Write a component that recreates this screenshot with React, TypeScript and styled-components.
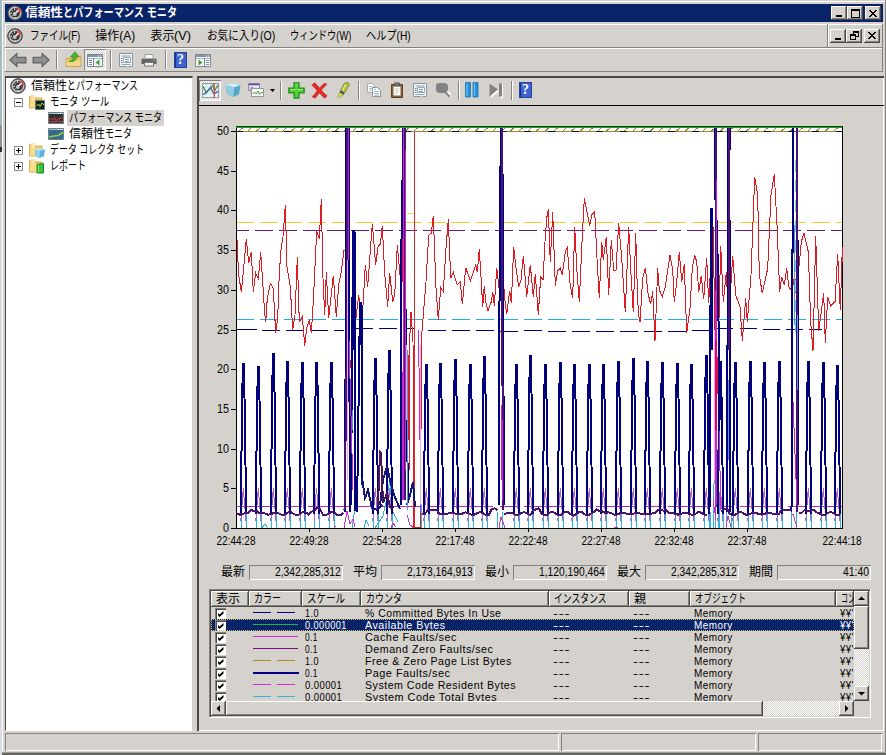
import React, { useLayoutEffect, useRef, useState } from 'react';
import styled, { createGlobalStyle, css } from 'styled-components';

const FACE = '#d5d2cd';
const NAVY = '#0a246a';
const SHADOW = '#85827e';
const DARK = '#4a4947';

const Global = createGlobalStyle`
  * { box-sizing: border-box; }
  html, body { margin: 0; background: ${FACE}; overflow: hidden; }
  body { font: 12px/16px "Liberation Sans", "Noto Sans CJK JP", sans-serif; color: #000; }
  svg { display: block; flex: none; }
`;

/* ---------- text fitted to a column width ---------- */
const FitBox = styled.span<{ $w: number }>`
  display: block;
  flex: none;
  width: ${p => p.$w}px;
  height: 16px;
  line-height: 16px;
`;
const FitInner = styled.span`
  display: inline-block;
  white-space: pre;
  transform-origin: 0 50%;
  line-height: 16px;
  vertical-align: top;
`;
function Fit({ w, children }: { w: number; children: React.ReactNode }) {
  const ref = useRef<HTMLSpanElement>(null);
  const [scale, setScale] = useState(1);
  useLayoutEffect(() => {
    if (ref.current) setScale(w / ref.current.offsetWidth);
  }, [w]);
  return (
    <FitBox $w={w}>
      <FitInner ref={ref} style={{ transform: `scaleX(${scale})` }}>{children}</FitInner>
    </FitBox>
  );
}

/* ---------- shared bevels ---------- */
const raised = css`
  background: ${FACE};
  box-shadow: inset -1px -1px ${DARK}, inset 1px 1px #fff, inset -2px -2px ${SHADOW};
`;
const sunken = css`
  box-shadow: inset 1px 1px ${SHADOW}, inset -1px -1px #fff;
`;

/* ---------- frame ---------- */
const Screen = styled.div`
  display: flex;
  width: 886px;
  height: 755px;
  background: ${FACE};
`;
const Backdrop = styled.div`
  width: 2px;
  background: linear-gradient(#9fbdc0 0 125px, #8f9493 125px 147px, #303030 147px 152px, #d9dde2 152px);
`;
const Frame = styled.div`
  flex: 1;
  display: flex;
  flex-direction: column;
  padding: 4px 2px 0 3px;
  border-bottom: 2px solid #66645f;
  box-shadow: inset 0 -1px #a09d98, inset -1px 0 ${SHADOW}, inset 0 1px ${FACE}, inset 1px 2px #fff;
`;
const TitleBar = styled.div`
  display: flex;
  align-items: center;
  height: 18px;
  margin-right: 1px;
  padding: 0 2px 0 2px;
  background: ${NAVY};
  color: #fff;
  font-weight: 700;
`;
const TitleText = styled.div`
  display: flex;
  flex: 1;
  padding-left: 2px;
`;
const BoxButton = styled.div<{ $gap?: boolean }>`
  width: 16px;
  height: 14px;
  margin-left: ${p => (p.$gap ? 2 : 0)}px;
  display: grid;
  place-items: center;
  ${raised}
`;
const MenuBar = styled.div`
  display: flex;
  align-items: center;
  height: 24px;
  margin: 2px 1px 0 0;
  padding-left: 2px;
  border: solid ${SHADOW};
  border-width: 0 1px 1px 0;
  box-shadow: inset 1px 1px #fff;
`;
const MenuItems = styled.div`
  display: flex;
  flex: 1;
  gap: 15.2px;
  padding-left: 7px;
`;
const MdiButtons = styled.div`
  display: flex;
  align-items: center;
  height: 23px;
  padding: 0 2px 0 2px;
  border-left: 1px solid ${SHADOW};
  box-shadow: inset 1px 0 #fff;
`;
const MainTools = styled.div`
  display: flex;
  align-items: center;
  height: 24px;
  margin-right: 1px;
  padding-left: 4px;
  border: solid ${SHADOW};
  border-width: 0 1px 1px 0;
  box-shadow: inset 1px 1px #fff;
`;
const Tool = styled.div<{ $w?: number; $on?: boolean }>`
  display: grid;
  place-items: center;
  flex: none;
  width: ${p => p.$w ?? 23}px;
  height: 21px;
  ${p => p.$on && css`
    background: repeating-conic-gradient(#fff 0 25%, ${FACE} 0 50%) 0 0 / 2px 2px;
    ${sunken}
  `}
`;
const Divider = styled.div<{ $m?: string }>`
  width: 2px;
  height: 19px;
  flex: none;
  margin: ${p => p.$m ?? '0 5px'};
  border-left: 1px solid ${SHADOW};
  border-right: 1px solid #fff;
`;
const Panes = styled.div`
  display: flex;
  height: 655px;
  margin-top: 4px;
`;
const TreePane = styled.div`
  width: 188px;
  flex: none;
  padding: 0 0 0 3px;
  background: #fff;
  border: solid ${DARK};
  border-width: 2px 0 0 1px;
  border-right: 1px solid ${FACE};
  border-bottom: 1px solid #fff;
`;
const TreeRow = styled.div<{ $depth: number }>`
  display: flex;
  align-items: center;
  height: 16px;
  padding-left: ${p => p.$depth}px;
`;
const TreeText = styled.div<{ $on?: boolean }>`
  display: flex;
  height: 16px;
  margin-left: 3px;
  padding: 0 2px;
  background: ${p => (p.$on ? FACE : 'transparent')};
`;
const Expander = styled.div`
  width: 9px;
  height: 9px;
  margin-right: 6px;
  display: grid;
  place-items: center;
  border: 1px solid #8b8b8b;
  background: #fff;
`;
const MonitorPane = styled.div`
  flex: 1;
  min-width: 0;
  display: flex;
  flex-direction: column;
  margin-left: 4px;
  border: solid ${DARK};
  border-width: 2px 0 0 2px;
  box-shadow: inset -1px -1px #fff;
`;
const GraphTools = styled.div`
  display: flex;
  align-items: center;
  height: 28px;
  padding-bottom: 3px;
  border-bottom: 1px solid #000;
`;

/* ---------- value bar ---------- */
const Stats = styled.div`
  display: flex;
  align-items: center;
  height: 16px;
  padding-left: 22px;
  margin-top: 6px;
`;
const Stat = styled.div`
  display: flex;
  align-items: center;
  width: 132px;
  flex: none;
`;
const StatValue = styled.div`
  display: flex;
  justify-content: flex-end;
  align-items: center;
  width: 94px;
  height: 15px;
  margin-left: 4px;
  padding-right: 2px;
  ${sunken}
`;

/* ---------- counter list ---------- */
const COLS = '38px 53px 59px 188px 80px 61px 146px 18px';
const ListFrame = styled.div`
  display: grid;
  grid-template: 110px 15px / 643px 15px;
  width: 662px;
  height: 129px;
  margin: 9px 0 0 10px;
  padding: 2px;
  border: solid #fff;
  border-width: 0 1px 1px 0;
  box-shadow: inset 1px 1px ${SHADOW}, inset 2px 2px ${DARK};
`;
const ListView = styled.div`
  overflow: hidden;
`;
const HeaderRow = styled.div`
  display: grid;
  grid-template-columns: ${COLS};
  height: 16px;
`;
const HeaderCell = styled.div`
  display: flex;
  align-items: center;
  overflow: hidden;
  padding-left: 5px;
  ${raised}
`;
const Row = styled.div<{ $on?: boolean }>`
  display: grid;
  grid-template-columns: ${COLS};
  height: 12px;
  align-items: center;
  font-size: 11px;
  letter-spacing: 0.5px;
  color: ${p => (p.$on ? '#fff' : '#000')};
  background: ${p => (p.$on ? NAVY : 'transparent')};
  outline: ${p => (p.$on ? '1px dotted #d9c06a' : 'none')};
  outline-offset: -1px;
`;
const Cell = styled.div<{ $pad?: number }>`
  display: flex;
  align-items: center;
  height: 12px;
  overflow: hidden;
  padding-left: ${p => p.$pad ?? 4}px;
`;
const Check = styled.div`
  display: grid;
  place-items: center;
  width: 11px;
  height: 11px;
  background: #fff;
  box-shadow: inset 1px 1px ${SHADOW}, inset 2px 2px ${DARK};
`;
const Bar = styled.div<{ $dir: 'row' | 'column' }>`
  display: flex;
  flex-direction: ${p => p.$dir};
  background: repeating-conic-gradient(#fff 0 25%, ${FACE} 0 50%) 0 0 / 2px 2px;
`;
const BarButton = styled.div`
  display: grid;
  place-items: center;
  width: 15px;
  height: 15px;
  flex: none;
  ${raised}
`;
const Thumb = styled.div<{ $w: number; $h: number }>`
  width: ${p => p.$w}px;
  height: ${p => p.$h}px;
  ${raised}
`;
const Push = styled.div`
  flex: 1;
`;

/* ---------- status bar ---------- */
const Status = styled.div`
  display: grid;
  grid-template-columns: 554px 195px 124px;
  gap: 2px;
  height: 18px;
  margin-top: 2px;
`;
const StatusPane = styled.div`
  ${sunken}
`;

/* ---------- icons ---------- */
const Ico = ({ children, s = 16 }: { children: React.ReactNode; s?: number }) => (
  <svg width={s} height={s} viewBox="0 0 16 16">{children}</svg>
);
const Gauge = () => (
  <Ico>
    <circle cx="8" cy="8" r="7.3" fill="#77787a" stroke="#3c3c3e" />
    <circle cx="8" cy="8" r="5.6" fill="#3a3c40" stroke="#c9c9c9" strokeWidth="1.3" />
    <path d="M3.5 8.5 5 8.2M4.5 5l1.2 1M7.6 3.3v1.6M4.8 11.4l1-1" stroke="#fff" />
    <path d="M9.5 2.300a6 6 0 0 1 4.500 5l-3.200.7Z" fill="#d53b43" />
    <path d="m7.5 9.2 4-4.2" stroke="#fff" strokeWidth="1.4" />
    <circle cx="7.8" cy="9" r="1.9" fill="#c8c8c8" />
    <path d="M6.5 12.5h4" stroke="#aaa" />
  </Ico>
);
const Arrow = ({ flip }: { flip?: boolean }) => (
  <Ico s={18}>
    <path d="M.8 8 7 2.3v3.2h8v5H7v3.2Z" fill="#8f8f8f" stroke="#5d5d5d" strokeWidth="1"
      transform={flip ? 'translate(16 0) scale(-1 1)' : undefined} />
  </Ico>
);
const UpFolder = () => (
  <Ico s={17}>
    <path d="M1 7h5l1-2h8v9.5H1Z" fill="#f2c763" stroke="#c59a3d" strokeWidth=".8" />
    <path d="M1.5 9h13v5h-13Z" fill="#f8d884" />
    <path d="M3.5 9.5C6 9.5 7.6 8 7.7 5.4H5.2L9.4.8l3.8 4.6h-2.4c0 3.600-3.500 5.600-7.300 4.100Z" fill="#4cb82f" stroke="#2b801c" strokeWidth=".6" />
  </Ico>
);
const Window = ({ side }: { side: 'l' | 'r' }) => (
  <Ico>
    <path d="M.5 2.500h15v12H.500Z" fill="#f7f8f8" stroke="#7c8791" />
    <path d="M1 3h14v2H1Z" fill="#8494a8" />
    <path d="M11 4h1m1 0h1" stroke="#fff" />
    <path d="M1 6.500h14" stroke="#aab3bc" />
    {side === 'l' ? (
      <>
        <path d="M6.500 6v8" stroke="#7c8791" />
        <path d="M2 8.500h3M2 10.500h3M2 12.500h3" stroke="#6f8fb8" />
        <path d="M12.500 7.500v6l-4-3Z" fill="#3d9b34" />
      </>
    ) : (
      <>
        <path d="M9.500 6v8" stroke="#7c8791" />
        <path d="M11 8.500h3M11 10.500h3M11 12.500h3" stroke="#6f8fb8" />
        <path d="M3.500 7.500v6l4-3Z" fill="#3d9b34" />
      </>
    )}
  </Ico>
);
const Properties = () => (
  <Ico>
    <path d="M1.500 1.500h13v13h-4l-1 1-1-1h-7Z" fill="#eef3f6" stroke="#8c959d" />
    <path d="M3.500 4h9M3.500 12.500h9" stroke="#8fa6ba" />
    <path d="M5.500 5.500h7v5h-7Z" fill="#fff" stroke="#9aa6b0" />
    <path d="M3 6.500h1.500M3 8.500h1.500M3 10.500h1.500" stroke="#5682b0" />
    <path d="M7 7.500h4M7 9.500h4" stroke="#87a0b6" />
  </Ico>
);
const Printer = () => (
  <Ico>
    <path d="M4 2.500h8V7H4Z" fill="#f8f8f8" stroke="#999" />
    <path d="M.5 6.500h15v5.500H.5Z" fill="#626466" />
    <path d="M1.5 6.500h13" stroke="#a9abad" />
    <path d="M3.500 10.500h9v3.500h-9Z" fill="#f5f5f5" stroke="#777" />
    <path d="M12 8.500h2" stroke="#5ec85e" />
  </Ico>
);
const HelpGlyph = styled.div`
  width: 13px;
  height: 16px;
  background: linear-gradient(90deg, #16318c 0 2px, #3f62cf 2px);
  color: #fff;
  font: 700 14px/16px "Liberation Serif", serif;
  text-align: center;
  padding-left: 1px;
  box-shadow: inset 0 0 0 1px #2243a0;
`;
const FolderBase = () => (
  <>
    <path d="M.500 2.500h5l1 1.500h6.500v10H.500Z" fill="#f0c860" stroke="#d0a446" strokeWidth=".8" />
    <path d="M2 1h4v12H2Z" fill="#f9e6a8" />
    <path d="M1 6h11v7.500H1Z" fill="#f8dc8a" />
  </>
);
const FolderScope = () => (
  <Ico><FolderBase /><path d="M6.500 6.500h9v9h-9Z" fill="#10261a" stroke="#6d7a6d" /><path d="m7.500 12 2-2 1.500 2.500 2-3.500 2 2" fill="none" stroke="#a6d94a" /></Ico>
);
const FolderCube = () => (
  <Ico><FolderBase /><path d="m6 7.500 4-1.200 6 1-1 7-4.500 1.700-4-2Z" fill="#5cb5dc" /><path d="m6 7.500 5 1.200 5-1.400-6-1Z" fill="#c7ecf8" /><path d="m6 7.500 5 1.200-.5 7.300-4-2Z" fill="#8fd2ec" /></Ico>
);
const FolderReport = () => (
  <Ico><FolderBase /><path d="m8 6.500 6.500-1v9.500H8Z" fill="#38c43a" stroke="#178a22" /><path d="M9.500 7v7" stroke="#82e67c" /></Ico>
);
const Thumbnail = ({ kind }: { kind: 'perf' | 'rel' }) => (
  <Ico>
    <path d="M.500 2.500h15v11H.500Z" fill={kind === 'perf' ? '#2c3235' : '#35688c'} stroke="#6b7f8b" />
    <path d="M1 3.500h14" stroke="#a8c3ce" />
    <path d="M10 3.500h1m1 0h1m1 0h1" stroke="#fff" />
    {kind === 'perf'
      ? <path d="m1 9.500 2-1 1.500 1.500 2-2.500 1.500 3 2-2 2 .5 1-2 2 1.500M1 11.500h3l2 .5 3-1 2 .5h4" fill="none" stroke="#d63a3a" />
      : <path d="m1 11 5-1 4-.5 5-3" fill="none" stroke="#8bd24a" strokeWidth="1.500" />}
  </Ico>
);
const GraphIcon = () => (
  <Ico s={17}>
    <path d="M.500 1.500h15v13H.500Z" fill="#f1f8fb" stroke="#8ea2ae" />
    <path d="M1 5h14M1 8h14M1 11h14M4 2v12M8 2v12" stroke="#c4d8e0" strokeWidth=".6" />
    <path d="m1 4 3 6 3-3 3-4 2 5 3-5" fill="none" stroke="#33963b" strokeWidth="1.200" />
    <path d="m1 12 3-2 4-5 3 6 4-2" fill="none" stroke="#3a5fae" strokeWidth="1.200" />
    <path d="M11.500 1v14" stroke="#e04a32" strokeWidth="1.300" />
  </Ico>
);
const CubeIcon = () => (
  <Ico>
    <path d="m.500 3.500 6-2 9 1.500-1.500 9.500-6 2.500-6-3Z" fill="#53a9c9" />
    <path d="m.500 3.500 6-2 9 1.500-6 2.200Z" fill="#d3f0f7" />
    <path d="m.500 3.500 9 1.700L8 15l-6-3Z" fill="#92cde2" />
  </Ico>
);
const ViewIcon = () => (
  <Ico>
    <path d="M.500 1.500h11v7H.500Z" fill="#e9e5f4" stroke="#8a83a8" />
    <path d="M1 2.500h10" stroke="#62509c" strokeWidth="1.500" />
    <path d="M2.500 5.500h3v2h-3Z" fill="#5b4d93" />
    <path d="M3.500 6.500h12v8h-12Z" fill="#f6f9f6" stroke="#8f9a9a" />
    <path d="m4.500 12 2-2 1.500 2 2-3 1.500 3.500 1.500-2h2" fill="none" stroke="#4a9a48" />
  </Ico>
);
const Plus = () => (
  <Ico s={17}><path d="M5.700.8h4.600v4.900h4.900v4.600h-4.900v4.900H5.700v-4.900H.8V5.700h4.900Z" fill="#55d036" stroke="#218a1c" strokeWidth="1.200" /><path d="M7 2.200h2M2.200 7H7M9 7h4.800" stroke="#a8f08c" /></Ico>
);
const Cross = () => (
  <Ico s={17}><path d="M.8 3 3.200.8C5 2 6.800 4 8.200 5.800 9.800 3.700 11.500 2 13.500 1l1.300 1.400c-1.800 1.400-3.600 3.300-5 5.400 1.500 1.800 3.400 3.700 5.400 5.200l-2.400 2.200c-1.800-1.400-3.500-3.200-4.900-5-1.300 1.800-2.600 3.600-4 5L1 13.800c1.800-1.600 3.500-3.500 4.900-5.600C4.300 6.300 2.600 4.500.8 3Z" fill="#e42a26" stroke="#b11717" strokeWidth=".5" /></Ico>
);
const Marker = () => (
  <Ico><path d="M9.500 1 13 .5l1.500 2.300L9.600 11 5.500 8.500Z" fill="#b5c23a" stroke="#6e7424" strokeWidth=".7" /><path d="M5.500 8.500 9.600 11l-1 1.800-4-2.400Z" fill="#33479c" /><path d="m4.600 10.400 4 2.400L4 15.500l-1.200-.8Z" fill="#e9d92e" stroke="#8c8428" strokeWidth=".5" /><path d="m10.500 2.500-3 6" stroke="#f4f6a8" /></Ico>
);
const Copy = () => (
  <Ico><path d="M1.500 1.500h5l2 2v7h-7Z" fill="#fff" stroke="#a7acb0" /><path d="M3 4.500h4M3 6.500h4M3 8.500h2" stroke="#a9bccb" /><path d="M6.500 5.500h5l3 3v6h-8Z" fill="#fff" stroke="#8f979e" /><path d="M8 9.500h5M8 11.500h5M8 13.200h5M8 7.500h2" stroke="#8fa9c0" strokeWidth=".8" /></Ico>
);
const Paste = () => (
  <Ico><path d="M2.500 2.500h11v13h-11Z" fill="#8c6038" stroke="#5c3c22" /><path d="M4.500 4.500h7v9h-7Z" fill="#fdfdfb" /><path d="M6 7h4.500M6 9h4.500M6 11h3" stroke="#c9c9c9" /><path d="M5.500.8h5v3h-5Z" fill="#777" stroke="#444" strokeWidth=".6" /></Ico>
);
const Magnifier = () => (
  <Ico><path d="m9.500 9 2-2 4.500 5v3h-3L9 11Z" fill="#fff" /><path d="M1 3.500C1 1.500 3 1 6.500 1s6.500.5 6.500 3v3c0 1.500-.5 2.500-1.500 3l4 4-1.500 1.500L9.500 11H5C2 11 1 9.500 1 7Z" fill="#828282" /></Ico>
);
const Pause = () => (
  <Ico><path d="M1.500.500h5v14.500h-5ZM9 .500h5v14.500H9Z" fill="#2391dc" stroke="#1467ac" strokeWidth=".7" /><path d="M3 1.500v12M10.500 1.500v12" stroke="#70c5f6" strokeWidth="1.200" /></Ico>
);
const Step = () => (
  <Ico><path d="m3 3 8 6-8 7ZM12 2h3v14h-3Z" fill="#fff" /><path d="m1.500 1.500 8.500 6-8.500 7ZM11 1.500h3v13h-3Z" fill="#828282" /></Ico>
);
const Tri = ({ d }: { d: string }) => <svg width="7" height="7" viewBox="0 0 7 7"><path d={d} fill="#000" /></svg>;
const MinGlyph = () => <svg width="9" height="8"><path d="M1 6h6v2H1Z" fill="#000" /></svg>;
const MaxGlyph = () => <svg width="9" height="9" shapeRendering="crispEdges"><path d="M0 0h9v9H0ZM1 2h7v6H1Z" fill="#000" fillRule="evenodd" /></svg>;
const RestoreGlyph = () => <svg width="9" height="9" shapeRendering="crispEdges"><path d="M3 0h6v6H6V5h2V2H4v1H3ZM0 3h6v6H0ZM1 5h4v3H1Z" fill="#000" fillRule="evenodd" /></svg>;
const CloseGlyph = () => <svg width="8" height="7" shapeRendering="crispEdges"><path d="m.5 0 7 7M7.500 0l-7 7" stroke="#000" strokeWidth="1.600" /></svg>;

/* ---------- graph ---------- */
type Pt = [number, number];
/* Sampled points are stored in thirds of a pixel, relative to the origin of their block. */
const block = (ox: number, oy: number, s: string): Pt[] =>
  s.trim().split(/\s+/).map(p => {
    const [x, y] = p.split(',').map(Number);
    return [ox + x / 3, oy + y / 3];
  });
const line = (pts: Pt[]) => pts.map(([x, y]) => `${x.toFixed(1)},${y.toFixed(1)}`).join(' ');

const redLine = line([
  ...block(210, 115, `80,355 84,440 86,480 94,530 100,470 109,371 116,445 124,410 130,530 137,474 145,490 152,412 158,500 164,595 167,622 172,550 181,505 190,520 197,655 203,610 208,475 213,405 219,365 226,270 231,455 241,515 248,645 255,600 262,427 268,620 277,605 284,692 290,640 298,615 304,655 310,560 320,348 328,373 334,252 339,490 344,600 349,470 356,610 370,482 379,605 386,510 394,470 402,405 407,405 410,560 412,270 416,470 420,760 432,660 446,540 455,640 466,450 473,515 487,326 497,450 504,395 511,388 517,332 524,475 533,575 539,473 548,560 554,540 562,390 570,480 575,300 584,760 594,980 597,720 603,590 609,680 612,1238 613,50 614,1238 631,1238`),
  ...block(420, 115, `5,660 10,600 18,500 26,360 34,355 40,302 48,520 55,615 62,518 70,530 78,400 85,313 92,490 100,472 112,510 121,500 127,568 137,458 151,498 167,450 172,470 178,402 184,500 188,575 193,512 197,560 204,588 214,560 218,530 223,573 230,458 237,520 244,420 248,430 253,540 260,598 269,527 274,565 281,397 288,460 296,515 303,495 310,422 320,545 331,450 340,545 346,477 355,600 362,485 369,495 375,380 380,310 385,283 391,442 398,292 406,512 413,468 421,460 427,480 436,410 442,398 450,505 458,550 464,335 471,470 478,560 485,400 493,250 501,290 509,333 515,300 524,290 531,430 538,550 545,380 550,435 559,365 566,540 574,375 581,465 588,465 596,324 605,430 616,592 626,337 633,480 640,592 647,355 653,560 658,615`),
  ...block(640, 115, `0,622 8,490 16,458 24,535 32,568 38,528 45,677 53,460 58,525 67,545 76,515 90,420 98,465 103,562 110,500 118,410 125,500 133,446 140,655 150,580 157,460 164,421 170,440 176,530 184,482 191,553 200,428 206,565 213,430 220,337 226,760 228,950 236,650 242,392 250,560 259,470 266,620 278,422 287,540 300,575 307,677 317,550 322,622 333,480 344,185 353,240 358,480 367,535 383,460 393,240 403,177 411,330 419,530 425,485 433,510 440,460 446,515 456,528 464,480 470,560 474,487 484,380 492,355 505,410 512,620 519,708 527,362 536,648 551,535 556,685 563,545 572,573 585,560 593,418 601,585 607,400`),
]);

const peaks: Pt[] = [
  [243.3, 364], [258.3, 367], [273.3, 354], [287.3, 361.5], [302.3, 362.5], [316.5, 362.5], [331.3, 362.5],
  [375.3, 358.5], [389.3, 350.5], [426.3, 364.5], [440.3, 363.5], [455.3, 359.5], [470.3, 364.5], [484.3, 356.5],
  [516.3, 364.5], [530.3, 355.5], [545.3, 364.5], [560.3, 362.5], [574.3, 364.5], [589.3, 364.5], [603.3, 364.5],
  [618.3, 361.5], [633.3, 358.5], [647.3, 362], [662.3, 362.5], [677.3, 363.5], [691.3, 364.5], [706.3, 355.5],
  [720.3, 362], [735.3, 362.5], [750.3, 362], [764.3, 362.5], [779.3, 361.5], [808.3, 361.5], [823.3, 362.5], [837.3, 365.5],
];
const cyanOnly = [499, 712, 728, 793];

/* Quiet level between the peaks, with a small deterministic ripple. */
const quiet = (from: number, to: number) => {
  const out: Pt[] = [];
  for (let x = from, i = 0; x <= to; x += 2.9, i++) {
    const r = Math.sin(x * 1.7) * 0.9 + Math.sin(x * 0.43) * 1.1 + (Math.sin(x * 12.9) > 0.86 ? -3.5 : 0);
    out.push([x, 513.6 + r]);
  }
  return line(out);
};

const yTicks = [50, 45, 40, 35, 30, 25, 20, 15, 10, 5, 0];
const xTicks: [number, string][] = [
  [236, '22:44:28'], [309, '22:49:28'], [382, '22:54:28'], [455, '22:17:48'], [528, '22:22:48'],
  [601, '22:27:48'], [674, '22:32:48'], [747, '22:37:48'], [842, '22:44:18'],
];

const dashes: [number, string, number, string][] = [
  [222.5, '#f0cc2c', 0, '18 6'], [230.5, '#70187e', 5, '18 6'], [319.5, '#1fb0ea', 0, '18 6'],
  [506.5, '#b928bb', 0, '41 7 18 6'],
];

function Graph() {
  return (
    <svg width="683" height="452" viewBox="199 106 683 452">
      <g shapeRendering="crispEdges" fill="none">
        <rect x="236" y="126" width="607" height="402" fill="#fff" />
        <g stroke="#81834a">
          {Array.from({ length: 69 }, (_, i) => <path key={i} d={`M${239 + i * 8.75} 131l4-3.500`} />)}
        </g>
        <path d="M236 131.500h607" stroke="#a28429" />
        <path d="M236 131.500h607" stroke="#111" strokeDasharray="7 17" />
        {dashes.map(([y, c, off, pattern]) => (
          <path key={y} d={`M236 ${y}h606`} stroke={c} strokeDasharray={pattern} strokeDashoffset={off} />
        ))}
        <path d="M236 329.500h21m5 1h18m6 0h18m6 0h18m6 0h10m11-2h18m6 0h18m6 0h12m13 2h18m6 0h18m6 0h18m6 1h18m6-1h18m6 1h18m6 0h18m6 0h18m6 0h18m6 0h18m6 0h18m6-1h18m6-2h17m7 0h17m6 1h17m6 0h17m6 0h13" stroke="#00007c" />
        <path d="M407 213.500h8" stroke="#eed36a" />

        <g stroke="#2fb2dc">
          {[...peaks.map(p => p[0]), ...cyanOnly].map(x => (
            <path key={x} d={`M${x - 1.800} 528V512M${x + 3.200} 528V512`} />
          ))}
          <path d="m262 528 3-4 3 4M364 528l2-8 3 6M375 528l8-12 3-14 4-22 2 30 6 12M713 528v-40l3-12 3 20v32M352 528l3-19M421 528v-24" />
        </g>
        <g stroke="#aa63bf">
          {peaks.map(([x]) => <polyline key={x} points={`${x - 2.5},521 ${x},488 ${x + 2.700},521`} />)}
        </g>
        <g stroke="#c23ac4">
          <path d="m344 528 3-17 3 13 3-5 2 8M391 528l2-5 3 4M499 528l2-11 4 11M713 500l3 20M726 527l2-11 3 11M791 516l2-2 4 13M407 515l3 10 4 3M334 528l2-2M614 527h4" />
        </g>

        <polyline points={redLine} stroke="#dc1c22" />
        <path d="M409.500 345V470M414.300 132V528" stroke="#d42a30" />

        <g stroke="#00007c" strokeWidth="2">
          {peaks.map(([x, y]) => (
            <polyline key={x} points={`${x - 2.700},514 ${x - 2},465 ${x - 0.500},${y} ${x + 0.700},${y} ${x + 2.200},465 ${x + 2.800},514`} strokeWidth="2" />
          ))}
          <path d="M345 512 346.500 128M349 128V345L350.500 512M351 505 353 231H354.500L355.500 511M357 512 360 303H361.500L362.500 485M401 505V270L402.500 180 403.500 128M405 128V270L408 500M499 505V370L500.800 128M502.300 128 504 505M709.500 512 711 208M714.500 128V200M717 220 720 420M727 512 728.200 128M729.200 128 730.500 512M791.500 512 793 128M797.300 128 798 505" />
        </g>
        <path d="M353.500 232V350M360.500 305V345M728.500 128V150" stroke="#00007c" strokeWidth="4" />
        <path d="M711.500 208V350" stroke="#00007c" strokeWidth="3" />
        <path d="m362 478 3 20 3-8 4 18 5 2 5-5M380 505l3-25 4-14 3 14 4 15 6 14M407 505l3-10 3-13 2 25" stroke="#151575" strokeWidth="2" />
        <path d="m378 505 2-53 1 1 2 50 4-10 3 14 4 0" stroke="#4b1659" strokeWidth="2" />
        <g stroke="#491374" strokeWidth="2">
          <polyline points={quiet(236, 345)} />
          <polyline points={quiet(422, 499)} />
          <polyline points={quiet(504, 708)} />
          <polyline points={quiet(721, 791)} />
          <polyline points={quiet(799, 842)} />
          <path d="m236 514 6 1M344.500 510 347 340V128M404.500 128 405.500 500M501.500 128 503 510M715.500 128V507M796.500 128 797 512M728.500 128V350" />
        </g>
        <g stroke="#d020cf">
          <path d="M348 128 348 260M402.500 500 404 128M405.500 150V470M716.500 180V505M715 290V520M719 430 721 510M501.500 405 502 480M793 402 797 505M418.500 330 421 512M349 340 353 490" />
        </g>
        <path d="M716 340V430" stroke="#e60073" strokeWidth="2" />
        <path d="M347.500 260V480M406.500 345V420M420 345V505M502.500 425V465M714.500 330V480" stroke="#f1a6e9" />
        <path d="M403.500 340V500M502 420V500" stroke="#bd27ca" />
        <path d="M352.500 410V430M407.500 350V510M728.500 380V460M794.500 225V325M797.500 315V390" stroke="#5797df" />
        <path d="M795 160V335" stroke="#72d3ed" strokeDasharray="12 8" />

        <path d="M236.500 126V528M842.500 126V529M231 528.500H843" stroke="#000" />
        <path d="M236 126.500h607" stroke="#103a18" />
        <path d="M236 127.500h606" stroke="#14ac22" />
        <path d="M842.500 247v15" stroke="#c12a34" />
        {yTicks.map(v => <path key={v} d={`M231 ${Math.round(528 - v * 7.940) + 0.500}h5`} stroke="#000" />)}
        {xTicks.slice(1, 8).map(([x]) => <path key={x} d={`M${x + 0.500} 528v4`} stroke="#000" />)}
      </g>
      <g fontFamily='"Liberation Sans", sans-serif' fontSize="12">
        {yTicks.map(v => (
          <text key={v} x="229" y={532 - v * 7.940} textAnchor="end" textLength={v > 9 ? 12 : 6} lengthAdjust="spacingAndGlyphs">{v}</text>
        ))}
        {xTicks.map(([x, t]) => (
          <text key={x} x={x - 19.500} y="545" textLength="39" lengthAdjust="spacingAndGlyphs">{t}</text>
        ))}
      </g>
    </svg>
  );
}

/* ---------- data ---------- */
type Counter = { color: string; dash?: boolean; thick?: boolean; scale: string; sw: number; name: string; nw: number };
const counters: Counter[] = [
  { color: '#00008a', dash: true, scale: '1.0', sw: 14, name: '% Committed Bytes In Use', nw: 136 },
  { color: '#22b24c', scale: '0.000001', sw: 42, name: 'Available Bytes', nw: 81 },
  { color: '#d529d0', scale: '0.1', sw: 13, name: 'Cache Faults/sec', nw: 92 },
  { color: '#800a80', scale: '0.1', sw: 13, name: 'Demand Zero Faults/sec', nw: 128 },
  { color: '#b08c20', dash: true, scale: '1.0', sw: 14, name: 'Free & Zero Page List Bytes', nw: 147 },
  { color: '#00008a', thick: true, scale: '0.1', sw: 13, name: 'Page Faults/sec', nw: 85 },
  { color: '#d529d0', dash: true, scale: '0.00001', sw: 37, name: 'System Code Resident Bytes', nw: 151 },
  { color: '#35b6d8', dash: true, scale: '0.00001', sw: 37, name: 'System Code Total Bytes', nw: 132 },
];
const headers: [string, number][] = [
  ['表示', 24], ['カラー', 27], ['スケール', 38], ['カウンタ', 36], ['インスタンス', 53], ['親', 12], ['オブジェクト', 51], ['コン', 14],
];
const stats: [string, string, number][] = [
  ['最新', '2,342,285,312', 66], ['平均', '2,173,164,913', 66], ['最小', '1,120,190,464', 66], ['最大', '2,342,285,312', 66], ['期間', '41:40', 26],
];
const menus: [string, string, number, number][] = [
  ['', 'ファイル(F)', 0, 50], ['操作', '(A)', 24, 16], ['表示', '(V)', 24, 17], ['', 'お気に入り(O)', 0, 68], ['', 'ウィンドウ(W)', 0, 61], ['', 'ヘルプ(H)', 0, 45],
];
const MenuItem = styled.div`
  display: flex;
`;

export default function App() {
  return (
    <Screen>
      <Global />
      <Backdrop />
      <Frame>
        <TitleBar>
          <Gauge />
          <TitleText><Fit w={38}>信頼性</Fit><Fit w={114}>とパフォーマンス モニタ</Fit></TitleText>
          <BoxButton><MinGlyph /></BoxButton>
          <BoxButton><MaxGlyph /></BoxButton>
          <BoxButton $gap><CloseGlyph /></BoxButton>
        </TitleBar>
        <MenuBar>
          <Gauge />
          <MenuItems>
            {menus.map(([a, b, wa, wb]) => (
              <MenuItem key={b}>{a && <Fit w={wa}>{a}</Fit>}<Fit w={wb}>{b}</Fit></MenuItem>
            ))}
          </MenuItems>
          <MdiButtons>
            <BoxButton><MinGlyph /></BoxButton>
            <BoxButton><RestoreGlyph /></BoxButton>
            <BoxButton $gap><CloseGlyph /></BoxButton>
          </MdiButtons>
        </MenuBar>
        <MainTools>
          <Tool $w={18}><Arrow /></Tool>
          <Tool $w={28}><Arrow flip /></Tool>
          <Divider $m="0 4px 0 1px" />
          <Tool $w={22}><UpFolder /></Tool>
          <Tool $w={22} $on><Window side="l" /></Tool>
          <Divider $m="0 4px 0 4px" />
          <Tool $w={20}><Properties /></Tool>
          <Tool $w={26}><Printer /></Tool>
          <Divider $m="0 4px 0 3px" />
          <Tool $w={18}><HelpGlyph>?</HelpGlyph></Tool>
          <Tool $w={28}><Window side="r" /></Tool>
        </MainTools>
        <Panes>
          <TreePane>
            <TreeRow $depth={1}><Gauge /><TreeText><Fit w={36}>信頼性</Fit><Fit w={71}>とパフォーマンス</Fit></TreeText></TreeRow>
            <TreeRow $depth={5}><Expander><svg width="5" height="5"><path d="M0 2.500h5" stroke="#000" /></svg></Expander><FolderScope /><TreeText><Fit w={59}>モニタ ツール</Fit></TreeText></TreeRow>
            <TreeRow $depth={39}><Thumbnail kind="perf" /><TreeText $on><Fit w={93}>パフォーマンス モニタ</Fit></TreeText></TreeRow>
            <TreeRow $depth={39}><Thumbnail kind="rel" /><TreeText><Fit w={36}>信頼性</Fit><Fit w={27}>モニタ</Fit></TreeText></TreeRow>
            <TreeRow $depth={5}><Expander><svg width="5" height="5"><path d="M0 2.500h5M2.500 0v5" stroke="#000" /></svg></Expander><FolderCube /><TreeText><Fit w={94}>データ コレクタ セット</Fit></TreeText></TreeRow>
            <TreeRow $depth={5}><Expander><svg width="5" height="5"><path d="M0 2.500h5M2.500 0v5" stroke="#000" /></svg></Expander><FolderReport /><TreeText><Fit w={36}>レポート</Fit></TreeText></TreeRow>
          </TreePane>
          <MonitorPane>
            <GraphTools>
              <Tool $w={22} $on><GraphIcon /></Tool>
              <Tool $w={23}><CubeIcon /></Tool>
              <Tool $w={23}><ViewIcon /></Tool>
              <Tool $w={10}><Tri d="M1 2h5L3.500 5Z" /></Tool>
              <Divider $m="0 3px 0 3px" />
              <Tool><Plus /></Tool>
              <Tool><Cross /></Tool>
              <Tool><Marker /></Tool>
              <Divider $m="0 3px 0 4px" />
              <Tool $w={22}><Copy /></Tool>
              <Tool><Paste /></Tool>
              <Tool><Properties /></Tool>
              <Tool><Magnifier /></Tool>
              <Divider $m="0 0 0 4px" />
              <Tool $w={24}><Pause /></Tool>
              <Tool $w={24}><Step /></Tool>
              <Divider $m="0 1px 0 3px" />
              <Tool $w={22}><HelpGlyph>?</HelpGlyph></Tool>
            </GraphTools>
            <Graph />
            <Stats>
              {stats.map(([label, value, w]) => (
                <Stat key={label}><Fit w={24}>{label}</Fit><StatValue><Fit w={w}>{value}</Fit></StatValue></Stat>
              ))}
            </Stats>
            <ListFrame>
              <ListView>
                <HeaderRow>
                  {headers.map(([h, w]) => <HeaderCell key={h}><Fit w={w}>{h}</Fit></HeaderCell>)}
                </HeaderRow>
                {counters.map((c, i) => (
                  <Row key={c.name} $on={i === 1}>
                    <Cell><Check><svg width="7" height="7"><path d="M1 3v2.500l1.500 1.500L6.500 3.500V1L2.500 4.500Z" fill="#000" /></svg></Check></Cell>
                    <Cell>
                      <svg width="46" height="4" shapeRendering="crispEdges">
                        <path d={c.thick ? 'M0 2h46' : 'M0 1.500h45'} stroke={c.color} strokeWidth={c.thick ? 2 : 1} strokeDasharray={c.dash ? '18 6 18 9' : undefined} />
                      </svg>
                    </Cell>
                    <Cell $pad={3}><Fit w={c.sw}>{c.scale}</Fit></Cell>
                    <Cell><Fit w={c.nw}>{c.name}</Fit></Cell>
                    <Cell><Fit w={18}>---</Fit></Cell>
                    <Cell><Fit w={18}>---</Fit></Cell>
                    <Cell><Fit w={39}>Memory</Fit></Cell>
                    <Cell><Fit w={14}>¥¥'</Fit></Cell>
                  </Row>
                ))}
              </ListView>
              <Bar $dir="column">
                <BarButton><Tri d="M0 5h7L3.500 1.500Z" /></BarButton>
                <Thumb $w={15} $h={43} />
                <Push />
                <BarButton><Tri d="M0 2h7L3.500 5.500Z" /></BarButton>
              </Bar>
              <Bar $dir="row">
                <BarButton><Tri d="M5 0v7L1.500 3.500Z" /></BarButton>
                <Thumb $w={537} $h={15} />
                <Push />
                <BarButton><Tri d="M2 0v7L5.500 3.500Z" /></BarButton>
              </Bar>
            </ListFrame>
          </MonitorPane>
        </Panes>
        <Status><StatusPane /><StatusPane /><StatusPane /></Status>
      </Frame>
    </Screen>
  );
}
